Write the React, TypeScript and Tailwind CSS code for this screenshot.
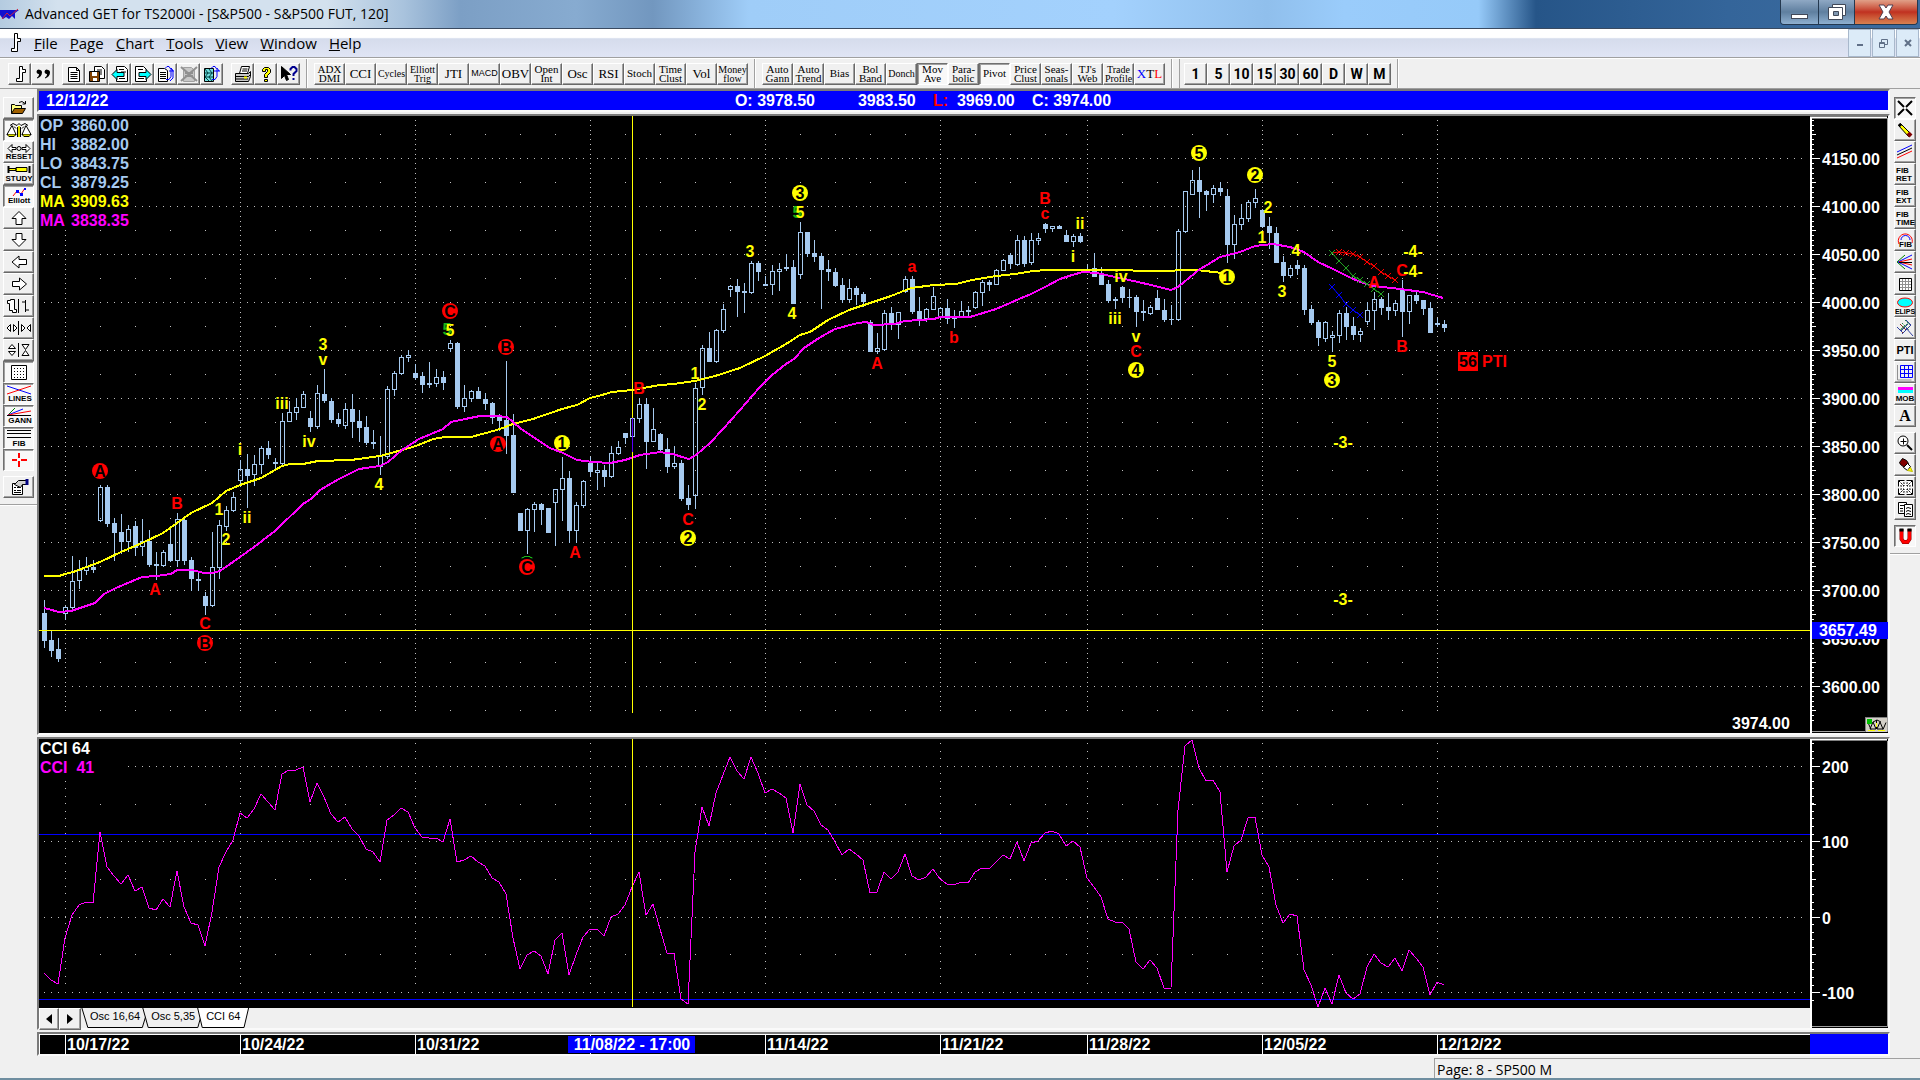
import type { ReactNode } from "react";

// [high, body top, body bottom, low, filled]
type Bar = [number, number, number, number, number];

const bars: Bar[] = [
  [600, 613, 641, 648, 1], [631, 640, 651, 657, 1], [638, 649, 659, 662, 1], [606, 607, 614, 620, 0],
  [556, 581, 608, 609, 0], [560, 570, 581, 589, 0], [557, 567, 571, 575, 0], [560, 567, 570, 573, 1],
  [485, 487, 521, 522, 0], [485, 487, 524, 527, 1], [518, 523, 533, 561, 1], [514, 532, 542, 554, 1],
  [525, 529, 542, 552, 0], [521, 526, 548, 556, 1], [519, 541, 547, 556, 0], [530, 541, 565, 567, 1],
  [552, 564, 566, 580, 1], [550, 552, 566, 567, 0], [529, 544, 561, 562, 1], [513, 519, 561, 567, 0],
  [517, 520, 561, 565, 1], [557, 560, 579, 591, 1], [571, 579, 581, 591, 1], [592, 596, 606, 615, 1],
  [532, 567, 606, 607, 0], [520, 525, 568, 579, 0], [506, 510, 527, 531, 0], [492, 497, 511, 512, 0],
  [460, 469, 481, 487, 0], [454, 469, 476, 508, 1], [455, 464, 475, 486, 0], [446, 448, 465, 474, 0],
  [441, 448, 455, 459, 1], [458, 462, 464, 469, 1], [413, 421, 464, 465, 0], [401, 412, 422, 422, 0],
  [398, 407, 413, 420, 0], [391, 394, 408, 408, 0], [411, 418, 427, 432, 1], [385, 393, 427, 429, 0],
  [369, 394, 401, 403, 1], [398, 401, 420, 423, 1], [413, 419, 424, 427, 1], [403, 409, 426, 429, 0],
  [394, 409, 422, 438, 1], [410, 421, 428, 442, 1], [416, 427, 443, 445, 1], [430, 442, 444, 449, 1],
  [436, 456, 467, 475, 0], [386, 389, 457, 459, 0], [371, 373, 390, 396, 0], [355, 357, 374, 375, 0],
  [350, 355, 358, 362, 0], [364, 373, 378, 380, 1], [372, 376, 385, 393, 1], [362, 383, 385, 388, 1],
  [369, 377, 384, 387, 0], [371, 377, 383, 390, 1], [340, 343, 349, 352, 0], [342, 343, 407, 409, 1],
  [385, 398, 407, 412, 0], [390, 391, 399, 402, 0], [387, 391, 399, 399, 1], [393, 399, 404, 410, 1],
  [402, 403, 418, 424, 1], [414, 417, 421, 431, 1], [361, 420, 436, 454, 1], [414, 435, 493, 493, 1],
  [513, 513, 531, 531, 1], [508, 509, 531, 554, 0], [502, 504, 510, 532, 0], [503, 504, 510, 525, 1],
  [508, 508, 533, 533, 1], [489, 489, 503, 546, 0], [457, 478, 490, 521, 0], [471, 478, 531, 543, 1],
  [502, 505, 531, 543, 0], [480, 481, 506, 508, 0], [457, 463, 472, 477, 1], [462, 470, 473, 490, 0],
  [465, 470, 477, 487, 1], [446, 453, 477, 478, 0], [441, 447, 454, 455, 0], [433, 433, 438, 444, 1],
  [418, 418, 437, 452, 0], [398, 404, 419, 423, 0], [398, 404, 442, 469, 1], [408, 429, 442, 442, 0],
  [433, 434, 450, 452, 1], [438, 449, 467, 473, 1], [446, 463, 467, 469, 0], [460, 463, 499, 501, 1],
  [485, 498, 505, 510, 1], [383, 388, 496, 509, 0], [345, 348, 388, 395, 0], [332, 348, 362, 362, 1],
  [329, 330, 362, 363, 0], [304, 309, 331, 333, 0], [285, 286, 290, 297, 0], [279, 286, 292, 317, 1],
  [283, 291, 293, 313, 1], [261, 263, 293, 294, 0], [261, 263, 272, 281, 1], [276, 284, 286, 286, 1],
  [265, 271, 285, 295, 0], [263, 269, 272, 291, 0], [254, 267, 269, 271, 1], [260, 267, 304, 304, 1],
  [222, 232, 275, 279, 0], [232, 232, 254, 257, 1], [240, 253, 257, 262, 1], [253, 256, 270, 309, 1],
  [260, 269, 272, 281, 1], [268, 272, 286, 287, 1], [278, 285, 300, 303, 1], [279, 288, 300, 302, 0],
  [286, 288, 295, 305, 1], [292, 294, 302, 307, 1], [320, 322, 352, 352, 1], [333, 348, 352, 354, 0],
  [310, 313, 350, 351, 0], [307, 313, 325, 330, 1], [312, 312, 325, 339, 0], [276, 279, 292, 293, 0],
  [276, 279, 312, 314, 1], [297, 311, 319, 326, 1], [308, 309, 319, 322, 0], [287, 296, 310, 310, 0],
  [307, 308, 318, 320, 0], [299, 308, 319, 324, 1], [310, 317, 319, 328, 1], [301, 311, 317, 318, 0],
  [306, 310, 312, 317, 1], [291, 292, 308, 309, 0], [280, 282, 293, 306, 0], [280, 282, 285, 291, 1],
  [269, 270, 285, 285, 0], [259, 260, 271, 271, 0], [253, 255, 264, 269, 1], [235, 240, 265, 266, 0],
  [236, 240, 264, 267, 1], [233, 240, 263, 265, 0], [233, 238, 241, 245, 0], [223, 224, 229, 233, 1],
  [226, 226, 229, 232, 0], [225, 226, 229, 229, 1], [230, 235, 242, 242, 1], [234, 236, 242, 247, 0],
  [233, 236, 242, 243, 1], [265, 269, 270, 270, 1], [253, 268, 277, 277, 1], [267, 275, 285, 285, 1],
  [280, 284, 301, 303, 1], [297, 299, 301, 309, 1], [286, 287, 298, 303, 1], [289, 297, 298, 308, 1],
  [295, 297, 312, 327, 1], [300, 311, 313, 321, 1], [305, 307, 314, 315, 0], [290, 298, 310, 310, 1],
  [299, 310, 320, 322, 1], [305, 319, 320, 325, 1], [229, 231, 320, 321, 0], [191, 191, 232, 233, 0],
  [170, 180, 195, 195, 0], [167, 180, 192, 218, 1], [190, 191, 195, 211, 1], [185, 188, 195, 203, 0],
  [182, 188, 192, 196, 1], [189, 196, 245, 263, 1], [215, 224, 245, 259, 0], [204, 218, 225, 230, 0],
  [200, 202, 219, 222, 0], [189, 198, 203, 208, 0], [209, 210, 227, 228, 1], [217, 226, 233, 249, 1],
  [227, 233, 263, 263, 1], [256, 262, 276, 282, 1], [265, 268, 276, 278, 0], [260, 265, 269, 275, 1],
  [265, 268, 310, 315, 1], [305, 309, 323, 325, 1], [320, 322, 338, 346, 1], [321, 322, 339, 342, 0],
  [331, 335, 338, 352, 0], [310, 313, 336, 343, 0], [307, 313, 327, 340, 1], [317, 326, 335, 340, 1],
  [328, 331, 335, 342, 0], [302, 310, 322, 325, 0], [292, 299, 311, 330, 0], [297, 299, 308, 315, 1],
  [293, 307, 311, 320, 1], [300, 303, 311, 316, 0], [280, 289, 312, 337, 1], [295, 295, 312, 324, 0],
  [290, 295, 301, 304, 1], [300, 300, 309, 315, 1], [302, 308, 333, 333, 1], [318, 323, 325, 327, 1],
  [320, 324, 328, 332, 1],
];

const cci = [
  973, 980, 984, 938, 915, 905, 902, 903, 832, 867, 876, 884, 875, 891, 887, 908, 910, 899, 907, 871,
  907, 923, 925, 946, 912, 867, 852, 840, 813, 818, 809, 794, 802, 810, 774, 770, 770, 767, 802, 783,
  797, 814, 822, 817, 829, 836, 849, 852, 862, 820, 815, 808, 812, 828, 837, 838, 838, 842, 819, 862,
  860, 856, 862, 866, 878, 882, 894, 938, 969, 955, 951, 956, 974, 940, 933, 975, 955, 937, 929, 929,
  936, 917, 914, 905, 887, 872, 915, 904, 929, 953, 953, 999, 1004, 852, 807, 826, 793, 775, 757, 771,
  779, 757, 773, 793, 789, 793, 798, 833, 784, 805, 811, 825, 830, 842, 855, 849, 854, 860, 893, 892,
  872, 879, 872, 854, 876, 880, 877, 869, 879, 884, 885, 882, 883, 872, 868, 869, 862, 855, 859, 842,
  861, 843, 841, 833, 831, 834, 846, 841, 847, 878, 887, 897, 919, 922, 922, 929, 962, 969, 960, 968,
  988, 988, 810, 746, 740, 768, 781, 780, 792, 872, 846, 840, 818, 817, 855, 867, 905, 923, 914, 916,
  970, 985, 1007, 988, 1004, 975, 993, 999, 994, 967, 954, 963, 967, 958, 971, 950, 958, 967, 995, 982,
  985,
];

const slowAverage =
  "44,576 59,576 65,574 73,572 100,562 121,552 142,543 163,533 177,523 191,513 212,503 226,491 240,485 261,478 282,466 290,464 303,464 318,461 351,460 380,456 402,450 416,446 433,439 445,437 471,437 486,433 500,429 513,424 533,419 562,409 577,405 590,398 602,395 612,392 632,390 660,385 674,384 695,381 715,376 740,368 765,356 786,344 800,335 810,332 828,320 849,310 870,303 891,296 911,288 934,285 956,284 972,280 996,276 1015,274 1033,271 1047,270 1126,270 1140,271 1171,271 1179,270 1197,270 1222,273";

const fastAverage =
  "44,608 59,612 71,611 95,603 104,594 116,588 142,577 156,576 171,574 177,570 192,570 204,573 212,573 220,571 233,562 254,547 275,531 303,504 311,499 320,490 339,479 359,469 380,466 388,462 402,450 419,439 443,429 451,422 465,419 480,416 497,416 507,417 520,428 542,443 550,448 563,453 577,460 593,462 610,463 625,460 640,455 660,452 673,454 682,457 689,459 696,455 710,443 723,429 740,410 759,388 772,375 786,364 794,359 804,348 819,338 835,329 858,323 866,322 874,325 894,324 905,321 934,319 940,317 970,317 983,313 996,309 1010,303 1019,299 1031,294 1045,287 1060,279 1072,275 1083,272 1097,273 1115,277 1129,280 1151,285 1171,290 1178,287 1200,269 1207,265 1220,257 1240,252 1255,246 1273,244 1290,247 1304,252 1318,262 1333,269 1347,276 1360,282 1373,286 1400,289 1423,292 1443,298";

const RED = "#ff0000";
const YELLOW = "#ffff00";
const GREEN = "#18b018";

// plain wave labels: text, centre x, baseline, colour
const waves: [string, number, number, string][] = [
  ["B", 177, 509, RED], ["1", 219, 515, YELLOW], ["2", 226, 545, YELLOW], ["A", 155, 595, RED],
  ["C", 205, 629, RED], ["i", 240, 455, YELLOW], ["ii", 247, 523, YELLOW], ["iii", 282, 409, YELLOW],
  ["iv", 309, 447, YELLOW], ["4", 379, 490, YELLOW], ["3", 323, 350, YELLOW], ["v", 323, 365, YELLOW],
  ["5", 447, 335, GREEN], ["5", 450, 336, YELLOW], ["A", 575, 558, RED], ["B", 639, 394, RED],
  ["C", 688, 525, RED], ["1", 695, 379, YELLOW], ["2", 702, 410, YELLOW], ["3", 750, 257, YELLOW],
  ["4", 792, 319, YELLOW], ["5", 797, 218, GREEN], ["5", 800, 218, YELLOW], ["a", 912, 272, RED],
  ["A", 877, 369, RED], ["b", 954, 343, RED], ["B", 1045, 204, RED], ["c", 1045, 219, RED],
  ["ii", 1080, 229, YELLOW], ["i", 1073, 262, YELLOW], ["iii", 1115, 324, YELLOW], ["iv", 1121, 282, YELLOW],
  ["v", 1136, 342, YELLOW], ["C", 1136, 357, RED], ["2", 1268, 213, YELLOW], ["1", 1262, 243, YELLOW],
  ["4", 1296, 256, YELLOW], ["3", 1282, 297, YELLOW], ["A", 1374, 288, RED], ["C", 1402, 276, RED],
  ["B", 1402, 352, RED], ["-4-", 1413, 257, YELLOW], ["-4-", 1413, 277, YELLOW], ["5", 1332, 367, YELLOW],
  ["-3-", 1343, 448, YELLOW], ["-3-", 1343, 605, YELLOW],
];

// circled wave labels: text, centre x, centre y, colour
const circled: [string, number, number, string][] = [
  ["A", 100, 471, RED], ["B", 205, 643, RED], ["C", 450, 311, RED], ["B", 506, 347, RED],
  ["A", 498, 444, RED], ["1", 562, 443, YELLOW], ["C", 527, 567, RED], ["2", 688, 538, YELLOW],
  ["3", 800, 193, YELLOW], ["4", 1136, 370, YELLOW], ["5", 1199, 153, YELLOW], ["2", 1255, 175, YELLOW],
  ["1", 1227, 277, YELLOW], ["3", 1332, 380, YELLOW],
];

const projections = [
  { color: RED, points: [253, 252, 253, 254, 257, 262, 266, 272, 276, 280] },
  { color: "#22a022", points: [253, 261, 268, 276, 280, 284, 289, 294] },
  { color: "#0000ff", points: [287, 295, 304, 310, 315] },
];

const weeks: [number, string][] = [
  [65, "10/17/22"], [240, "10/24/22"], [415, "10/31/22"], [590, ""], [765, "11/14/22"],
  [940, "11/21/22"], [1087, "11/28/22"], [1262, "12/05/22"], [1437, "12/12/22"],
];

const dayColumns = [
  100, 135, 170, 205, 275, 310, 345, 380, 450, 485, 520, 555, 625, 660, 695, 730, 800, 835, 870, 905,
  975, 1010, 1045, 1066, 1122, 1157, 1192, 1227, 1297, 1332, 1367, 1402,
];

const range = (from: number, to: number, step: number) => {
  const out: number[] = [];
  for (let v = from; v <= to; v += step) out.push(Math.round(v));
  return out;
};

const dots = (xs: number[], ys: number[]) =>
  xs.map((x) => ys.map((y) => `M${x} ${y + 0.5}h1`).join("")).join("");

const columnsX = weeks.map(([x]) => x);
const rowX = range(44, 1803, 7);

const priceGrid =
  dots(rowX, range(158, 700, 48)) +
  dots(columnsX, range(120, 712, 4.8)) +
  dots(dayColumns, range(134, 712, 48));

const cciGrid =
  dots(rowX, [766, 841, 917, 992]) +
  dots(columnsX, range(743, 990, 7.5)) +
  dots(dayColumns, [804, 879, 954]);

const barX = (i: number) => 44 + i * 7;

function Candles() {
  return (
    <g fill="#a6caf0" shapeRendering="crispEdges">
      {bars.map(([high, top, bottom, low, filled], i) => {
        const x = barX(i);
        if (filled) {
          return (
            <g key={i}>
              <rect x={x} y={high} width="1" height={low - high} />
              <rect x={x - 2} y={top} width="5" height={bottom - top} />
            </g>
          );
        }
        return (
          <g key={i}>
            <rect x={x} y={high} width="1" height={top - high} />
            <rect x={x} y={bottom} width="1" height={low - bottom} />
            <rect x={x - 1.5} y={top + 0.5} width="4" height={bottom - top - 1} fill="none" stroke="#a6caf0" />
          </g>
        );
      })}
    </g>
  );
}

function PricePlot() {
  return (
    <svg className="min-w-0 flex-1 bg-black font-['Liberation_Sans',sans-serif] text-[16px] font-bold">
      <g transform="translate(-39 -116)">
        <path d={priceGrid} stroke="#c0c0c0" shapeRendering="crispEdges" />
        <Candles />
        <g fill="none" strokeWidth="2" shapeRendering="crispEdges">
          <polyline points={slowAverage} stroke={YELLOW} />
          <polyline points={fastAverage} stroke="#ff00ff" />
        </g>
        {projections.map(({ color, points }) => (
          <g key={color} stroke={color} fill="none">
            <polyline points={points.map((y, i) => `${1332 + i * 7},${y}`).join(" ")} />
            <path d={points.map((y, i) => `M${1329 + i * 7} ${y - 3}l6 6m0 -6l-6 6`).join("")} />
          </g>
        ))}
        <path d="M522 558.5v-1h2v-1h6v1h2v1" stroke={GREEN} fill="none" />
        <g textAnchor="middle">
          {waves.map(([text, x, y, color], i) => (
            <text key={i} x={x} y={y} fill={color}>
              {text}
            </text>
          ))}
          {circled.map(([text, x, y, color], i) => (
            <g key={i}>
              <circle cx={x} cy={y} r="8" fill={color} />
              <text x={x} y={y + 6} fill="#000">
                {text}
              </text>
            </g>
          ))}
        </g>
        <rect x="1458" y="352" width="20" height="19" fill={RED} />
        <text x="1459" y="367" fill="#000">
          56
        </text>
        <text x="1482" y="367" fill={RED}>
          PTI
        </text>
        <text x="1732" y="729" fill="#fff">
          3974.00
        </text>
        <g stroke={YELLOW} shapeRendering="crispEdges">
          <path d="M632.5 116v597" />
          <path d="M0 630.5h4000" />
        </g>
        <path d="M632.5 418v34" stroke="#5a00ff" />
      </g>
    </svg>
  );
}

function PriceAxis() {
  const labels = [4150, 4100, 4050, 4000, 3950, 3900, 3850, 3800, 3750, 3700, 3650, 3600];
  return (
    <svg className="w-[78px] shrink-0 bg-black font-['Liberation_Sans',sans-serif] text-[16px] font-bold">
      <g transform="translate(-1810 -116)">
        <path d="M1811 733V117.5H1887" stroke="#fff" strokeWidth="2" fill="none" />
        <path d="M1887.5 118V731.5H1812" stroke="#a0a0a0" fill="none" />
        <g stroke="#fff" shapeRendering="crispEdges">
          <path d={range(120, 722, 4.8).map((y) => `M1812 ${y + 0.5}h2`).join("")} />
          <path d={range(134, 715, 48).map((y) => `M1812 ${y + 0.5}h4`).join("")} />
          <path d={range(158, 700, 48).map((y) => `M1812 ${y + 0.5}h8`).join("")} />
        </g>
        {labels.map((value, i) => (
          <text key={value} x="1822" y={165 + i * 48} fill="#fff">
            {value.toFixed(2)}
          </text>
        ))}
        <rect x="1812" y="622" width="76" height="17" fill="#0000ff" />
        <text x="1819" y="636" fill="#fff">
          3657.49
        </text>
        <g transform="translate(1865 717)">
          <rect width="22" height="15" fill="#d4d0c8" />
          <path d="M0 .5h22M.5 0v15" stroke="#808080" />
          <path d="M5 12l3-7 3 7zM12 12l3-7 3 7zM8 5l4-2 4 2M6 12.500l-3-7M18 12.500l3-7M11.500 3v9" stroke="#000" fill="none" />
          <path d="M3 13.500h7M13 13.500h7M11.500 6v4" stroke="#ffff00" />
          <path d="M2 2h5v5h-5z" fill="#00c000" />
        </g>
      </g>
    </svg>
  );
}

function CciPlot() {
  return (
    <svg className="min-w-0 flex-1 bg-black">
      <g transform="translate(-39 -739)" shapeRendering="crispEdges">
        <path d={cciGrid} stroke="#c0c0c0" />
        <path d="M0 834.5h4000M0 999.5h4000" stroke="#0000ff" />
        <polyline points={cci.map((y, i) => `${barX(i)},${y}`).join(" ")} fill="none" stroke="#ff00ff" />
        <path d="M632.5 739v300" stroke={YELLOW} />
      </g>
    </svg>
  );
}

function CciAxis() {
  return (
    <svg className="w-[78px] shrink-0 bg-black font-['Liberation_Sans',sans-serif] text-[16px] font-bold">
      <g transform="translate(-1810 -739)">
        <path d="M1811 1028V739.5H1887" stroke="#fff" strokeWidth="2" fill="none" />
        <path d="M1887.5 741V1026.5H1812" stroke="#a0a0a0" fill="none" />
        <g stroke="#fff" shapeRendering="crispEdges">
          <path d={range(743, 1000, 7.55).map((y) => `M1812 ${y + 0.5}h2`).join("")} />
          <path d="M1812 804.5h4m-4 75h4m-4 75h4" />
          <path d="M1812 766.5h8m-8 75h8m-8 76h8m-8 75h8" />
        </g>
        <g fill="#fff">
          <text x="1822" y="773">200</text>
          <text x="1822" y="848">100</text>
          <text x="1822" y="924">0</text>
          <text x="1822" y="999">-100</text>
        </g>
      </g>
    </svg>
  );
}

function TimeAxis() {
  return (
    <svg className="min-w-0 flex-1 bg-black font-['Liberation_Sans',sans-serif] text-[16px] font-bold">
      <g transform="translate(-39 0)">
        <path d="M0 .5h4000M39.5 0v20" stroke="#fff" />
        <path d={columnsX.map((x) => `M${x}.5 0v20`).join("")} stroke="#fff" />
        {weeks.map(([x, label]) => (
          <text key={x} x={x + 2} y="16" fill="#fff">
            {label}
          </text>
        ))}
        <rect x="568" y="2" width="127" height="17" fill="#0000ff" />
        <text x="632" y="16" fill="#fff" textAnchor="middle">
          11/08/22 - 17:00
        </text>
      </g>
    </svg>
  );
}

type ToolProps = { label: string; pressed?: boolean; className?: string; children: ReactNode };

function Tool({ label, pressed, className = "", children }: ToolProps) {
  return (
    <button
      type="button"
      aria-label={label}
      aria-pressed={pressed}
      className={`flex h-[22px] shrink-0 items-center justify-center border text-black ${
        pressed
          ? "border-t-[#707070] border-l-[#707070] border-r-white border-b-white bg-[#f8f8f8] shadow-[inset_1px_1px_0_#a0a0a0]"
          : "border-t-white border-l-white border-r-[#696969] border-b-[#696969] bg-[#f0f0f0] shadow-[inset_-1px_-1px_0_#a0a0a0]"
      } ${className}`}
    >
      {children}
    </button>
  );
}

function Icon({ w = 18, children }: { w?: number; children: ReactNode }) {
  return (
    <svg
      width={w}
      height="18"
      viewBox={`0 0 ${w} 18`}
      fill="none"
      stroke="#000"
      className="shrink-0 overflow-visible font-['Liberation_Sans',sans-serif] text-[8px] font-bold"
    >
      {children}
    </svg>
  );
}

const barShape = <path d="M8.500 1.500h3v3h3v3h-3v9h-6v-3h3z" fill="#fff" />;
const sheet = <path d="M3.500 2.500h8l3 3v11h-11zM11.500 2.500v3h3M5.500 7.500h7M5.500 9.500h7M5.500 11.500h7M5.500 13.500h7" fill="#fff" />;

const fileTools: { label: string; icon: ReactNode }[][] = [
  [
    { label: "Bar chart", icon: barShape },
    {
      label: "Quote",
      icon: (
        <path
          d="M6 5a2.200 2.200 0 1 0-1 4c0 2-1 3-2 3.500v1c3-1 5-3 5-6 0-1.500-.8-2.500-2-2.500zM14 5a2.200 2.200 0 1 0-1 4c0 2-1 3-2 3.500v1c3-1 5-3 5-6 0-1.500-.8-2.500-2-2.500z"
          fill="#000"
          stroke="none"
        />
      ),
    },
  ],
  [
    { label: "New page", icon: sheet },
    {
      label: "Save page",
      icon: (
        <>
          <path d="M6.500 1.500h7l3 3v9h-10zM9 5h5M9 7h5M9 9h5" fill="#fff" />
          <path d="M1.500 6.500h10v10h-10z" fill="#804000" />
          <path d="M4 7h5v4h-5zM5 13h4v3h-4z" fill="#fff" stroke="none" />
        </>
      ),
    },
    {
      label: "Previous page",
      icon: (
        <>
          <path d="M5.500 1.500h8l3 3v12h-11zM8 4.500h5M8 13.500h6M10 7h5" fill="#fff" />
          <path d="M1 9.500l5-5v3h7v4h-7v3z" fill="#00ffff" />
        </>
      ),
    },
    {
      label: "Next page",
      icon: (
        <>
          <path d="M1.500 1.500h8l3 3v12h-11zM4 4.500h5M4 13.500h6" fill="#fff" />
          <path d="M17 9.500l-5-5v3h-7v4h7v3z" fill="#00ffff" />
        </>
      ),
    },
    {
      label: "Page cycle",
      icon: (
        <>
          <path d="M1.500 3.500h6l3 2v11h-9zM3 7.500h6M3 9.500h6M3 11.500h6M3 13.500h6" fill="#fff" />
          <path d="M9 14.500h3l2-3v-7l-2-3h-2l-2 2M13 16l3-3V6l-2-3M12 6h5M14 3l2 3" stroke="#0000ff" />
        </>
      ),
    },
    {
      label: "Delete page",
      icon: (
        <>
          <path d="M3.500 2.500h8l3 3v11h-11z" fill="#c8c8c8" stroke="#a0a0a0" />
          <path d="M1 2l16 14M17 2L1 16M5 8h8M5 11h8" stroke="#909090" strokeWidth="2" />
        </>
      ),
    },
    {
      label: "Refresh chart",
      icon: (
        <>
          <path d="M1.500 3.500h9v13h-9z" fill="#70e0e0" />
          <path d="M2 4l3 4-3 4 4 4M6 4l3 4-3 4 3 4M2 8h8M2 12h8" stroke="#004040" />
          <path d="M9 14.500h3l2-3v-7l-2-3h-2l-2 2M11 6h6M14 3l2 3" stroke="#0000ff" />
        </>
      ),
    },
  ],
  [
    {
      label: "Print",
      icon: (
        <>
          <path d="M5.500 8.500l2-7h8l-2 7M8.500 4h5M8 6h5" fill="#fff" />
          <path d="M1.500 8.500h13l2-2v5l-2 5h-13z" fill="#c8c8c8" />
          <path d="M1.500 11.500h13l2-2M2 14h12" />
          <path d="M10 12.500h3" stroke="#ffff00" strokeWidth="2" />
        </>
      ),
    },
    {
      label: "Help",
      icon: (
        <path
          d="M5.500 6.500v-2l2-2h4l2 2v3l-3 3v2h-3v-3l3-3v-2h-2v2zM7.500 14.500h3v2h-3z"
          fill="#ffff00"
        />
      ),
    },
    {
      label: "Context help",
      icon: (
        <>
          <path d="M1.500 1.500v12l3-3 2 5 2-1-2-5h4z" fill="#000" />
          <path d="M10.500 5.500V4l2-2h2l2 2v2l-3 3v2M13.500 13v2" stroke="#000090" strokeWidth="2" />
        </>
      ),
    },
  ],
];

type Study = { name: string[]; size: "xs" | "sm" | "md" | "lg"; pressed?: boolean };

const studies: Study[] = [
  { name: ["ADX", "DMI"], size: "md" },
  { name: ["CCI"], size: "lg" },
  { name: ["Cycles"], size: "sm" },
  { name: ["Elliott", "Trig"], size: "sm" },
  { name: ["JTI"], size: "lg" },
  { name: ["MACD"], size: "xs" },
  { name: ["OBV"], size: "lg" },
  { name: ["Open", "Int"], size: "md" },
  { name: ["Osc"], size: "lg" },
  { name: ["RSI"], size: "lg" },
  { name: ["Stoch"], size: "md" },
  { name: ["Time", "Clust"], size: "md" },
  { name: ["Vol"], size: "lg" },
  { name: ["Money", "flow"], size: "sm" },
];

const overlays: Study[] = [
  { name: ["Auto", "Gann"], size: "md" },
  { name: ["Auto", "Trend"], size: "md" },
  { name: ["Bias"], size: "md" },
  { name: ["Bol", "Band"], size: "md" },
  { name: ["Donch"], size: "sm" },
  { name: ["Mov", "Ave"], size: "md", pressed: true },
  { name: ["Para-", "bolic"], size: "md" },
  { name: ["Pivot"], size: "md", pressed: true },
  { name: ["Price", "Clust"], size: "md" },
  { name: ["Seas-", "onals"], size: "md" },
  { name: ["TJ's", "Web"], size: "md" },
  { name: ["Trade", "Profile"], size: "sm" },
];

const sizes = {
  xs: "text-[9px] font-['Liberation_Sans',sans-serif]",
  sm: "text-[10px] font-['Liberation_Serif',serif]",
  md: "text-[11px] font-['Liberation_Serif',serif]",
  lg: "text-[13px] font-['Liberation_Serif',serif]",
};

function StudyButton({ name, size, pressed }: Study) {
  return (
    <Tool label={name.join(" ")} pressed={pressed} className="w-[31px]">
      <span className={`text-center leading-[9px] ${sizes[size]}`}>
        {name.map((line) => (
          <span key={line} className="block">
            {line}
          </span>
        ))}
      </span>
    </Tool>
  );
}

function Separator() {
  return <div className="mx-[6px] h-[29px] w-0.5 border-l border-[#a0a0a0] bg-white" />;
}

function Toolbar() {
  return (
    <div className="flex h-[31px] items-center overflow-hidden border-t border-b border-t-white border-b-[#a0a0a0] bg-[#f0f0f0] pl-2">
      <div className="flex gap-2">
        {fileTools.map((group, i) => (
          <div key={i} className="flex">
            {group.map(({ label, icon }) => (
              <Tool key={label} label={label} className="w-[23px]">
                <Icon>{icon}</Icon>
              </Tool>
            ))}
          </div>
        ))}
      </div>
      <Separator />
      {studies.map((s) => (
        <StudyButton key={s.name.join()} {...s} />
      ))}
      <Separator />
      {overlays.map((s) => (
        <StudyButton key={s.name.join()} {...s} />
      ))}
      <Tool label="XTL" className="w-[31px]">
        <span className="text-[13px] leading-none font-['Liberation_Serif',serif]">
          <span className="text-[#0000ff]">X</span>T<span className="text-[#ff0000]">L</span>
        </span>
      </Tool>
      <Separator />
      <div className="mr-1 h-[29px] border-l border-[#a0a0a0]" />
      {["1", "5", "10", "15", "30", "60", "D", "W", "M"].map((t) => (
        <Tool key={t} label={t} className="w-[23px]">
          <span className="text-[14px] leading-none font-bold font-['Roboto',sans-serif]">{t}</span>
        </Tool>
      ))}
      <Separator />
    </div>
  );
}

const leftTools: { label: string; icon: ReactNode; pressed?: boolean }[] = [
  {
    label: "Open",
    icon: (
      <>
        <path d="M6.500 14.500v-9h3l1 1h6v3" fill="#ffff80" />
        <path d="M6.500 14.500l3-5h11l-3 5z" fill="#a06000" />
        <path d="M14 3.500l3-1 3 2M20.500 2v3h-3" />
      </>
    ),
  },
  {
    label: "Scales",
    pressed: true,
    icon: (
      <>
        <path d="M7 4.500l-5 9h9zM21 4.500l-4 9h9z" fill="#fff" />
        <path d="M3 14.500h7M18 14.500h7" stroke="#e0e000" strokeWidth="2" />
        <path d="M2 13.500l2 2h5l2-2M17 13.500l2 2h5l2-2M5 4.500l3-2 4 2 2-2 2 2 4-2 3 2" />
        <path d="M12.500 16V6M15.500 16V6M11 7.500l-2-2M17 7.500l2-2" />
        <path d="M14 5v11" stroke="#e0e000" strokeWidth="2" />
      </>
    ),
  },
  {
    label: "Reset",
    icon: (
      <>
        <path d="M3 5.500l4-4v3h4v2h-4v3zM25 5.500l-4-4v3h-4v2h4v3z" fill="#fff" />
        <circle cx="14" cy="5.500" r="2" />
        <text x="14" y="16" textAnchor="middle" fill="#000" stroke="none">RESET</text>
      </>
    ),
  },
  {
    label: "Study",
    icon: (
      <>
        <path d="M3.500 1v7M24.500 1v7" strokeWidth="2" />
        <path d="M4 3.500h7v2h-7zM11 2.500h11v4h-11z" fill="#ffff00" />
        <text x="14" y="16" textAnchor="middle" fill="#000" stroke="none">STUDY</text>
      </>
    ),
  },
  {
    label: "Elliott",
    pressed: true,
    icon: (
      <>
        <path d="M8 9l4-5 4 3 4-6" stroke="#ff0000" />
        <path d="M11 3h3v3h-3zM15 6h3v3h-3zM19 1h2v2h-2z" fill="#0000ff" stroke="none" />
        <text x="14" y="16" textAnchor="middle" fill="#000" stroke="none">Elliott</text>
      </>
    ),
  },
  { label: "Up", icon: <path d="M14 2.500l7 7h-4v6h-6v-6h-4z" fill="#fff" /> },
  { label: "Down", icon: <path d="M14 15.500l7-7h-4v-6h-6v6h-4z" fill="#fff" /> },
  { label: "Left", icon: <path d="M7 9l7-6v3.500h7.500v5h-7.500v3.500z" fill="#fff" /> },
  { label: "Right", icon: <path d="M21.500 9l-7-6v3.500h-7v5h7v3.500z" fill="#fff" /> },
  {
    label: "Bar width",
    icon: (
      <>
        <path d="M2.500 3.500h3v-1h4v10h2v3h-4v-2h-3v-7h-2z" fill="#fff" />
        <path d="M13.500 2v14" />
        <path d="M20.500 3v12M17 5h3M21 13h3" />
      </>
    ),
  },
  {
    label: "Compress",
    icon: <path d="M5.500 5.500v7l-3.500-3.500zM8.500 5.500v7l3.500-3.500zM13.500 2v14M16.500 5.500v7l3.500-3.500zM25.500 5.500v7l-3.500-3.500z" fill="#fff" />,
  },
  {
    label: "Stretch",
    icon: <path d="M3.500 7.500h7l-3.500-4zM3.500 10.500h7l-3.500 4zM13.500 2v14M17 3.500h7l-3.500 5zM17 14.500h7l-3.500-5z" fill="#fff" />,
  },
  {
    label: "Grid",
    pressed: true,
    icon: (
      <>
        <path d="M6.500 2.500h15v14h-15z" fill="#fff" />
        <path d="M9 5.500h12M9 8.500h12M9 11.500h12M9 14.500h12" strokeDasharray="1 2" />
      </>
    ),
  },
  {
    label: "Lines",
    pressed: true,
    icon: (
      <>
        <path d="M2 1l24 8" stroke="#0000ff" />
        <path d="M2 9l24-8" stroke="#ff0000" />
        <text x="15" y="16" textAnchor="middle" fill="#000" stroke="none">LINES</text>
      </>
    ),
  },
  {
    label: "Gann",
    pressed: true,
    icon: (
      <>
        <path d="M3 8l7-7" stroke="#008000" />
        <path d="M3 8l15-6" stroke="#0000ff" />
        <path d="M3 8l23-4" stroke="#ff0000" />
        <path d="M2 8.500h24" />
        <text x="15" y="16" textAnchor="middle" fill="#000" stroke="none">GANN</text>
      </>
    ),
  },
  {
    label: "Fib",
    pressed: true,
    icon: (
      <>
        <path d="M2 1.500h24M2 4.500h24M2 8.500h24" />
        <text x="14" y="17" textAnchor="middle" fill="#000" stroke="none">FIB</text>
      </>
    ),
  },
  {
    label: "Crosshair",
    pressed: true,
    icon: <path d="M14 2v5M14 10v6M7 9h5M16 9h6" stroke="#ff0000" strokeWidth="2" />,
  },
];

const rightTools: { label: string; icon: ReactNode; pressed?: boolean }[][] = [
  [
    {
      label: "Select",
      pressed: true,
      icon: (
        <path
          d="M2 2l5 5M16 2l-5 5M2 16l5-5M16 16l-5-5M7 7l1 1M11 7l-1 1M7 11l1-1M11 11l-1-1"
          strokeWidth="2"
        />
      ),
    },
    {
      label: "Pencil",
      icon: (
        <>
          <path d="M2.500 4.500l2-2 10 10-2 3z" fill="#ffff00" />
          <path d="M3 3l2 2" strokeWidth="3" />
          <path d="M12 12l3 3" stroke="#800000" strokeWidth="4" />
        </>
      ),
    },
    {
      label: "Parallel lines",
      icon: (
        <>
          <path d="M1 9l15-7" stroke="#0000ff" />
          <path d="M1 12l15-7" />
          <path d="M1 15l15-7" stroke="#ff0000" />
        </>
      ),
    },
    { label: "Fib retracement", icon: <Stacked top="FIB" bottom="RET" /> },
    { label: "Fib extension", icon: <Stacked top="FIB" bottom="EXT" /> },
    { label: "Fib time", icon: <Stacked top="FIB" bottom="TIME" /> },
    {
      label: "Fib circle",
      icon: (
        <>
          <path d="M3 13a7 7 0 1 1 13-1" stroke="#ff0000" />
          <path d="M5 9a4 4 0 0 1 9 0" stroke="#0000ff" />
          <text x="9.500" y="16" textAnchor="middle" fill="#000" stroke="none">FIB</text>
        </>
      ),
    },
    {
      label: "Fan",
      icon: (
        <>
          <path d="M1 9l8-7M1 9l8 7" stroke="#008000" />
          <path d="M2 9l14-7M2 9l14 7" stroke="#0000ff" />
          <path d="M3 9l13-3M3 9l13 3" stroke="#ff0000" />
          <path d="M3 9.500h13" />
        </>
      ),
    },
    {
      label: "Grid tool",
      icon: (
        <>
          <path d="M3.500 3.500h12v12h-12z" fill="#fff" />
          <path d="M6.500 4v11M9.500 4v11M12.500 4v11M4 6.500h11M4 9.500h11M4 12.500h11" stroke="#909090" />
        </>
      ),
    },
    {
      label: "Ellipse",
      icon: (
        <>
          <ellipse cx="9" cy="5.500" rx="7.500" ry="4.500" fill="#00ffff" stroke="#ff0000" />
          <text x="9" y="17" textAnchor="middle" fill="#000" stroke="none" fontSize="7">ELIPS</text>
        </>
      ),
    },
    {
      label: "Pitchfork",
      icon: (
        <>
          <path d="M1 8l6 6M4 5l6 6M7 2" stroke="#803020" />
          <path d="M1 8l3 3 5-5M6 4l7 7M9 1l6 6M13 3l-9 9" stroke="#208040" strokeDasharray="2 1" />
          <path d="M5 12l7-7M10 9l7 8M1 8l5 5M10 1l5 5-9 9" stroke="#3040a0" />
        </>
      ),
    },
    {
      label: "PTI",
      icon: (
        <text x="9" y="13" textAnchor="middle" fill="#000" stroke="none" fontSize="11">PTI</text>
      ),
    },
    {
      label: "Blue grid",
      icon: (
        <>
          <path d="M1.500 2v15h14" stroke="#909090" />
          <path d="M4.500 2.500h12v12h-12zM8.500 2v12M12.500 2v12M4 6.500h12M4 10.500h12" stroke="#0000ff" />
        </>
      ),
    },
    {
      label: "MOB",
      icon: (
        <>
          <path d="M2 3.500h15" stroke="#ff00ff" strokeWidth="3" />
          <path d="M2 6.500h15" stroke="#00ffff" strokeWidth="3" />
          <text x="9" y="16" textAnchor="middle" fill="#000" stroke="none">MOB</text>
        </>
      ),
    },
    {
      label: "Text",
      icon: (
        <text x="9" y="14" textAnchor="middle" fill="#000" stroke="none" fontSize="16" fontFamily="Liberation Serif">
          A
        </text>
      ),
    },
  ],
  [
    {
      label: "Zoom",
      icon: (
        <>
          <circle cx="7" cy="7" r="5" fill="#fff" />
          <path d="M4.500 7.500h6M7.500 4.500v6" />
          <path d="M11 11l5 5" strokeWidth="2" />
        </>
      ),
    },
    {
      label: "Eraser",
      icon: (
        <>
          <path d="M3.500 6.500l3-4 4 2 2 3-4 4-4-3z" fill="#800000" />
          <path d="M7.500 11.500l4-4 3 3-3 4z" fill="#fff" />
          <path d="M11.500 14.500l3-3 2 4z" fill="#ffff00" stroke="#c0c000" />
        </>
      ),
    },
    {
      label: "Fit",
      icon: (
        <>
          <path d="M2.500 2.500h14v14h-14z" fill="#fff" />
          <path d="M3 3l5 5M8 4v4h-4M16 3l-5 5M11 4v4h4M3 16l5-5M4 11h4v4M16 16l-5-5M15 11h-4v4" strokeDasharray="2 1" />
          <path d="M9.500 2v3M9.500 14v3M2 9.500h3M14 9.500h3" stroke="#f0f0f0" strokeWidth="2" />
        </>
      ),
    },
    {
      label: "Copy",
      icon: (
        <>
          <path d="M2.500 2.500h8v11h-8zM4 5.500h4M4 8.500h3M4 11h3" fill="#fff" />
          <path d="M8.500 4.500h8v12h-8zM10 8.500l2-1 3 1M10 11.500l2-1 3 1M10 14.500l2-1 3 1" fill="#fff" />
        </>
      ),
    },
  ],
  [
    {
      label: "Magnet",
      pressed: true,
      icon: (
        <>
          <path d="M5.500 2v10l2 3h4l2-3V2" stroke="#800000" strokeWidth="4" />
          <path d="M5.500 2v10l2 3h4l2-3V2" stroke="#ff0000" strokeWidth="3" />
          <path d="M3.500 3h4M11.500 3h4" strokeWidth="3" />
        </>
      ),
    },
  ],
];

function Stacked({ top, bottom }: { top: string; bottom: string }) {
  return (
    <g fill="#000" stroke="none">
      <text x="0" y="8">{top}</text>
      <text x="0" y="16">{bottom}</text>
    </g>
  );
}

function LeftTools() {
  return (
    <div className="w-[37px] shrink-0 pl-[3px]">
      <div className="flex flex-col pt-2">
        {leftTools.map(({ label, icon, pressed }) => (
          <Tool key={label} label={label} pressed={pressed} className="w-[31px]">
            <Icon w={28}>{icon}</Icon>
          </Tool>
        ))}
        <Tool label="Properties" className="mt-[5px] w-[31px]">
          <Icon w={28}>
            <path d="M7.500 5.500h10v11h-10zM9 9.500h2M12 9.500h4M9 12.500h2M12 12.500h4M9 14.500h7" fill="#fff" />
            <path d="M9.500 6.500l4-4h8v4h-4l-2 3z" fill="#d0d0d0" />
            <path d="M22 1v6" stroke="#000080" strokeWidth="3" />
          </Icon>
        </Tool>
      </div>
      <div className="mt-1.5 -ml-[3px] h-0.5 border-t border-[#a0a0a0] bg-white" />
    </div>
  );
}

function RightTools() {
  return (
    <div className="w-[30px] shrink-0">
      <div className="flex flex-col gap-[5px] pt-2 pl-1">
        {rightTools.map((group, i) => (
          <div key={i} className="flex flex-col">
            {group.map(({ label, icon, pressed }) => (
              <Tool key={label} label={label} pressed={pressed} className="w-[22px]">
                <Icon>{icon}</Icon>
              </Tool>
            ))}
          </div>
        ))}
      </div>
      <div className="mt-1.5 h-0.5 border-t border-[#a0a0a0] bg-white" />
    </div>
  );
}

function TitleBar() {
  return (
    <header className="flex h-[29px] items-start border-b border-[#3a4a60] bg-[linear-gradient(90deg,#b4cbe0_0%,#d3e1ee_3%,#d3e1ee_17%,#a9c3dd_21%,#7c9fc5_24%,#87abd0_30%,#7297bf_34%,#9fcdf8_39%,#a3d1fd_58%,#90bfec_66%,#9accfb_70%,#96caf9_77%,#265588_80%,#34659a_90%,#3d6c9f_100%)]">
      <svg width="20" height="14" viewBox="0 0 20 14" className="mt-2 shrink-0">
        <path d="M0 2h19l-4 3v6l-3-3-3 3-3-2-3 2-3-4z" fill="#1010d0" />
        <path d="M2 11l5-6 3 3 8-7" stroke="#d02040" fill="none" />
      </svg>
      <h1 className="ml-[5px] text-[14px] leading-[28px] text-black font-['Open_Sans',sans-serif]">
        Advanced GET for TS2000i - [S&amp;P500 - S&amp;P500 FUT, 120]
      </h1>
      <div className="mr-[2px] ml-auto flex h-[25px] overflow-hidden rounded-b border border-t-0 border-[#24384f]">
        <button type="button" aria-label="Minimize" className="flex w-[38px] items-end justify-center border-r border-[#24384f] bg-linear-to-b from-[#8fa8c4] via-[#5f7f9f] to-[#8fb0d0] pb-[5px]">
          <span className="h-[5px] w-[17px] border border-[#404858] bg-white" />
        </button>
        <button type="button" aria-label="Restore" className="flex w-[36px] items-center justify-center border-r border-[#24384f] bg-linear-to-b from-[#8fa8c4] via-[#5f7f9f] to-[#8fb0d0]">
          <svg width="20" height="18" viewBox="0 0 20 18" fill="#fff" stroke="#404858">
            <path d="M5.500 1.500h13v11h-13z" />
            <path d="M1.500 4.500h14v12h-14z" />
            <path d="M6.500 8.500h5v4h-5z" fill="#7f97b0" />
          </svg>
        </button>
        <button type="button" aria-label="Close" className="flex w-[62px] items-center justify-center bg-linear-to-b from-[#e0a088] via-[#c03020] to-[#d88050]">
          <svg width="18" height="16" viewBox="0 0 18 16">
            <path d="M2 1h5l2 3 2-3h5l-4 7 4 7h-5l-2-3-2 3h-5l4-7z" fill="#fff" stroke="#504050" />
          </svg>
        </button>
      </div>
    </header>
  );
}

const menus = ["File", "Page", "Chart", "Tools", "View", "Window", "Help"];

function MenuBar() {
  const mdi = "flex w-[23px] items-center justify-center border border-[#a8b8cc] bg-[#dcebf8]";
  return (
    <div className="flex h-[29px] items-stretch border-b border-[#a0a0a0] bg-linear-to-b from-white from-30% via-[#d5dcec] via-35% to-[#e0e5f5] pl-2">
      <svg width="18" height="22" viewBox="0 0 18 22" className="mt-[3px] mr-2 shrink-0">
        <path d="M6.500 1.500h3v5h3v3h-3v10h-6v-3h3z" fill="#fff" stroke="#000" />
      </svg>
      <nav className="flex items-center gap-3 text-[15px] text-black font-['Open_Sans',sans-serif]">
        {menus.map((m) => (
          <button key={m} type="button">
            <span className="underline">{m[0]}</span>
            {m.slice(1)}
          </button>
        ))}
      </nav>
      <div className="mr-px ml-auto flex gap-px">
        <button type="button" aria-label="Minimize chart" className={mdi}>
          <svg width="8" height="8"><path d="M1 6h6" stroke="#607088" strokeWidth="2" /></svg>
        </button>
        <button type="button" aria-label="Restore chart" className={mdi}>
          <svg width="9" height="9" fill="none" stroke="#607088"><path d="M.5 3.500h5v5h-5zM2.500 3V.5h6v5H6M1 4.500h4" /></svg>
        </button>
        <button type="button" aria-label="Close chart" className={mdi}>
          <svg width="8" height="8"><path d="M1 1l6 6M7 1L1 7" stroke="#607088" strokeWidth="2" /></svg>
        </button>
      </div>
    </div>
  );
}

function StudyTabs() {
  return (
    <div className="flex h-[21px] items-start border-t border-black bg-[#f0f0f0] text-[11px] font-normal text-black font-['Liberation_Sans',sans-serif]">
      <Tool label="Previous tab" className="w-5">
        <svg width="6" height="10"><path d="M6 0v10L0 5z" /></svg>
      </Tool>
      <Tool label="Next tab" className="w-[22px]">
        <svg width="6" height="10"><path d="M0 0v10l6-5z" /></svg>
      </Tool>
      {["Osc 16,64", "Osc 5,35", "CCI 64"].map((tab) => (
        <button key={tab} type="button" className="relative -mr-[7px] h-5 px-[9px] pb-1 leading-4">
          <svg className="absolute inset-0 h-full w-full" viewBox="0 0 60 20" preserveAspectRatio="none">
            <path
              d="M.5 -1L6 19.500h48L59.500 -1"
              fill={tab === "CCI 64" ? "#fff" : "#f0f0f0"}
              stroke="#000"
              vectorEffect="non-scaling-stroke"
            />
          </svg>
          <span className="relative">{tab}</span>
        </button>
      ))}
    </div>
  );
}

const panel = "flex border-2 border-t-[#7a7a7a] border-l-[#7a7a7a] border-r-[#fafafa] border-b-[#fafafa]";

const readout = [
  ["OP", "3860.00", "text-[#a6caf0]"],
  ["HI", "3882.00", "text-[#a6caf0]"],
  ["LO", "3843.75", "text-[#a6caf0]"],
  ["CL", "3879.25", "text-[#a6caf0]"],
  ["MA", "3909.63", "text-[#ffff00]"],
  ["MA", "3838.35", "text-[#ff00ff]"],
];

export default function App() {
  return (
    <div className="flex min-h-screen flex-col overflow-hidden bg-[#f0f0f0]">
      <TitleBar />
      <MenuBar />
      <Toolbar />
      <div className="flex flex-1">
        <LeftTools />
        <main className="flex min-w-0 flex-1 flex-col gap-0.5 text-[16px] leading-[19px] font-bold font-['Liberation_Sans',sans-serif]">
          <div className={`${panel} bg-[#0000ff] pl-[7px] text-white`}>
            <span className="w-[37.4%]">12/12/22</span>
            <span className="w-[123px]">O: 3978.50</span>
            <span className="w-[75px]">3983.50</span>
            <span className="w-6 text-[#ff0000]">L:</span>
            <span className="w-[75px]">3969.00</span>
            <span>C: 3974.00</span>
          </div>

          <section className={`${panel} relative flex-1`}>
            <PricePlot />
            <PriceAxis />
            <dl className="absolute top-0 left-0 bg-black pr-1">
              {readout.map(([name, value, color], i) => (
                <div key={i} className={`flex ${color}`}>
                  <dt className="w-8 pl-px">{name}</dt>
                  <dd>{value}</dd>
                </div>
              ))}
            </dl>
          </section>

          <section className={`${panel} relative h-[293px]`}>
            <div className="flex min-w-0 flex-1 flex-col">
              <CciPlot />
              <StudyTabs />
            </div>
            <CciAxis />
            <div className="absolute top-0 left-0 bg-black pr-8 pl-px">
              <p className="text-white">CCI 64</p>
              <p className="whitespace-pre text-[#ff00ff]">CCI  41</p>
            </div>
          </section>

          <div className={`${panel} h-6`}>
            <TimeAxis />
            <div className="w-[78px] bg-[#0000ff]" />
          </div>
        </main>
        <RightTools />
      </div>
      <footer className="flex h-6 justify-end border-b-2 border-[#6f8ea0] pt-0.5 text-[14px] leading-[22px] text-black font-['Open_Sans',sans-serif]">
        <div className="w-[486px] border-t border-l border-[#a0a0a0] pl-0.5">Page: 8 - SP500 M</div>
      </footer>
    </div>
  );
}
